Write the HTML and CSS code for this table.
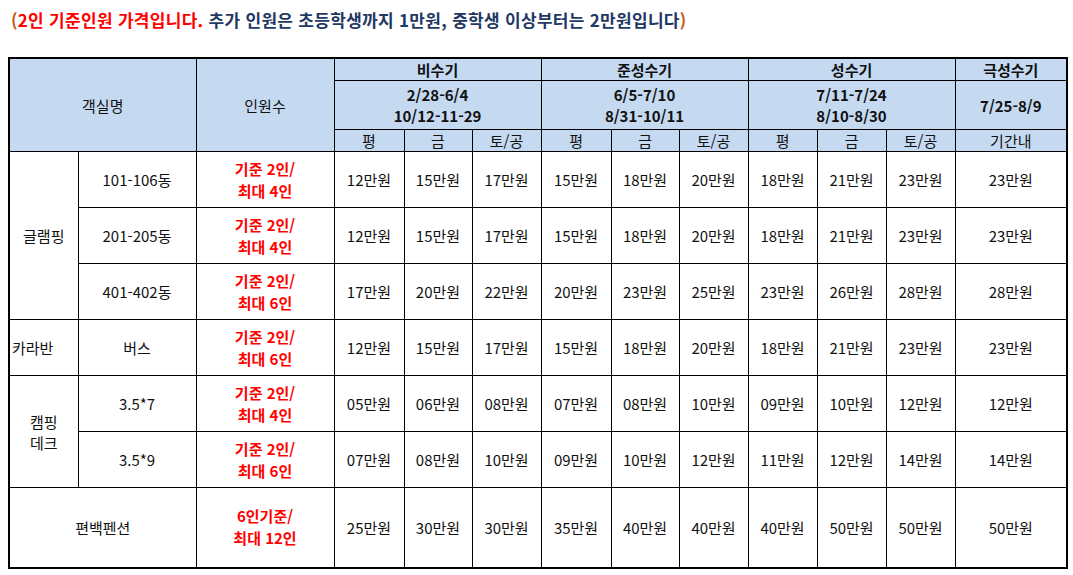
FILE: index.html
```html
<!DOCTYPE html>
<html lang="ko">
<head>
<meta charset="utf-8">
<link rel="stylesheet" href="styles.css">
</head>
<body>
<p class="title"><span class="paren">(</span><span class="red">2인 기준인원 가격입니다.</span> 추가 인원은 초등학생까지 1만원, 중학생 이상부터는 2만원입니다<span class="paren">)</span></p>
<table class="price">
  <colgroup>
    <col class="c-a"><col class="c-b"><col class="c-c">
    <col class="c-p1"><col class="c-p2"><col class="c-p3">
    <col class="c-p1"><col class="c-p2"><col class="c-p3">
    <col class="c-p3"><col class="c-p3"><col class="c-p3">
    <col class="c-last">
  </colgroup>
  <thead>
    <tr class="h1">
      <th colspan="2" rowspan="3" class="plain">객실명</th>
      <th rowspan="3" class="plain">인원수</th>
      <th colspan="3">비수기</th>
      <th colspan="3">준성수기</th>
      <th colspan="3">성수기</th>
      <th>극성수기</th>
    </tr>
    <tr class="h2">
      <th colspan="3">2/28-6/4<br>10/12-11-29</th>
      <th colspan="3">6/5-7/10<br>8/31-10/11</th>
      <th colspan="3">7/11-7/24<br>8/10-8/30</th>
      <th>7/25-8/9</th>
    </tr>
    <tr class="h3">
      <th class="plain">평</th><th class="plain">금</th><th class="plain">토/공</th>
      <th class="plain">평</th><th class="plain">금</th><th class="plain">토/공</th>
      <th class="plain">평</th><th class="plain">금</th><th class="plain">토/공</th>
      <th class="plain">기간내</th>
    </tr>
  </thead>
  <tbody>
    <tr class="r">
      <td rowspan="3">글램핑</td><td>101-106동</td><td class="cap">기준 2인/<br>최대 4인</td>
      <td>12만원</td><td>15만원</td><td>17만원</td><td>15만원</td><td>18만원</td><td>20만원</td><td>18만원</td><td>21만원</td><td>23만원</td><td>23만원</td>
    </tr>
    <tr class="r">
      <td>201-205동</td><td class="cap">기준 2인/<br>최대 4인</td>
      <td>12만원</td><td>15만원</td><td>17만원</td><td>15만원</td><td>18만원</td><td>20만원</td><td>18만원</td><td>21만원</td><td>23만원</td><td>23만원</td>
    </tr>
    <tr class="r">
      <td>401-402동</td><td class="cap">기준 2인/<br>최대 6인</td>
      <td>17만원</td><td>20만원</td><td>22만원</td><td>20만원</td><td>23만원</td><td>25만원</td><td>23만원</td><td>26만원</td><td>28만원</td><td>28만원</td>
    </tr>
    <tr class="r">
      <td class="left">카라반</td><td>버스</td><td class="cap">기준 2인/<br>최대 6인</td>
      <td>12만원</td><td>15만원</td><td>17만원</td><td>15만원</td><td>18만원</td><td>20만원</td><td>18만원</td><td>21만원</td><td>23만원</td><td>23만원</td>
    </tr>
    <tr class="r">
      <td rowspan="2">캠핑<br>데크</td><td>3.5*7</td><td class="cap">기준 2인/<br>최대 4인</td>
      <td>05만원</td><td>06만원</td><td>08만원</td><td>07만원</td><td>08만원</td><td>10만원</td><td>09만원</td><td>10만원</td><td>12만원</td><td>12만원</td>
    </tr>
    <tr class="r">
      <td>3.5*9</td><td class="cap">기준 2인/<br>최대 6인</td>
      <td>07만원</td><td>08만원</td><td>10만원</td><td>09만원</td><td>10만원</td><td>12만원</td><td>11만원</td><td>12만원</td><td>14만원</td><td>14만원</td>
    </tr>
    <tr class="r last">
      <td colspan="2">편백펜션</td><td class="cap">6인기준/<br>최대 12인</td>
      <td>25만원</td><td>30만원</td><td>30만원</td><td>35만원</td><td>40만원</td><td>40만원</td><td>40만원</td><td>50만원</td><td>50만원</td><td>50만원</td>
    </tr>
  </tbody>
</table>
</body>
</html>
```

FILE: styles.css
```css
html, body {
  margin: 0;
  padding: 0;
  background: #ffffff;
}
body {
  padding: 0 7px 0 8px;
  font-family: "Noto Sans CJK KR", "Noto Sans", sans-serif;
  color: #111111;
}
.title {
  margin: 0;
  padding: 9px 0 0 3px;
  height: 57px;
  box-sizing: border-box;
  font-size: 17px;
  line-height: 22px;
  font-weight: 700;
  color: #1f3864;
  letter-spacing: 0.3px;
}
.title .red { color: #ff0000; }
.title .paren { color: #c55a11; }

.price {
  border-collapse: collapse;
  table-layout: fixed;
  width: 1058px;
  font-size: 15px;
  border: 2px solid #000;
}
.c-a { width: 69px; }
.c-b { width: 118px; }
.c-c { width: 138px; }
.c-p1 { width: 70px; }
.c-p2 { width: 68px; }
.c-p3 { width: 69px; }
.c-last { width: 112px; }

.price th, .price td {
  border: 1px solid #000;
  padding: 0;
  text-align: center;
  vertical-align: middle;
  line-height: 21px;
}
.price th {
  background: #c5d9f1;
  font-weight: 700;
  color: #111;
}
.price th.plain { font-weight: 400; }
.h1 { height: 22px; }
.h2 { height: 49px; }
.h3 { height: 22px; }
.r { height: 56px; }
.r.last { height: 80px; }
.price td.cap {
  color: #ff0000;
  font-weight: 700;
  line-height: 22px;
}
.price td.left {
  text-align: left;
  padding-left: 2px;
}
```
